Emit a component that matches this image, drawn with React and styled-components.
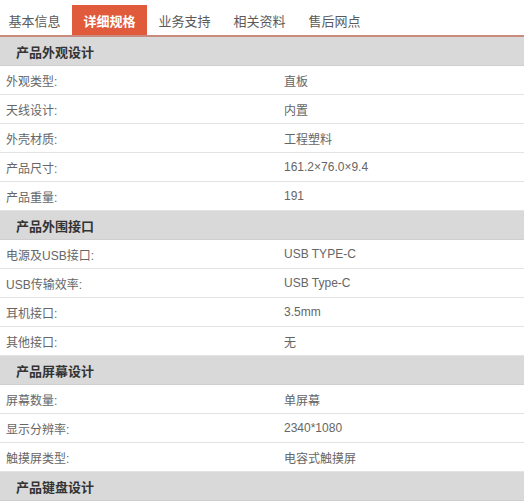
import styled, { createGlobalStyle } from "styled-components";

const GlobalStyle = createGlobalStyle`
  body {
    margin: 0;
    background: #ffffff;
    font-family: "Liberation Sans", "Noto Sans CJK SC", sans-serif;
  }
`;

const Page = styled.div`
  width: 524px;
  height: 501px;
  overflow: hidden;
  background: #ffffff;
`;

const Tabs = styled.div`
  display: flex;
  align-items: flex-end;
  height: 37px;
  margin-left: -3px;
  border-bottom: 2px solid #c98b7e;
  box-sizing: border-box;
`;

const Tab = styled.div`
  width: 75px;
  height: 30px;
  display: flex;
  align-items: center;
  justify-content: center;
  font-size: 13px;
  color: ${(p) => (p.$active ? "#fff" : "#5a5a5a")};
  background: ${(p) => (p.$active ? "#e05b3b" : "transparent")};
  font-weight: ${(p) => (p.$active ? "bold" : "normal")};
`;

const Section = styled.div`
  height: 29px;
  display: flex;
  align-items: center;
  padding-left: 16px;
  background: #d9d9d9;
  border-bottom: 1px solid #cfcfcf;
  box-sizing: border-box;
  font-size: 13px;
  font-weight: bold;
  color: #333;
`;

const Row = styled.div`
  height: 29px;
  display: flex;
  align-items: center;
  border-bottom: 1px solid #e3e3e3;
  box-sizing: border-box;
  font-size: 12px;
  color: #666;
`;

const Label = styled.div`
  width: 284px;
  padding-left: 6px;
  box-sizing: border-box;
`;

const Value = styled.div`
  flex: 1;
`;

const tabs = ["基本信息", "详细规格", "业务支持", "相关资料", "售后网点"];

const groups = [
  {
    title: "产品外观设计",
    rows: [
      ["外观类型:", "直板"],
      ["天线设计:", "内置"],
      ["外壳材质:", "工程塑料"],
      ["产品尺寸:", "161.2×76.0×9.4"],
      ["产品重量:", "191"],
    ],
  },
  {
    title: "产品外围接口",
    rows: [
      ["电源及USB接口:", "USB TYPE-C"],
      ["USB传输效率:", "USB Type-C"],
      ["耳机接口:", "3.5mm"],
      ["其他接口:", "无"],
    ],
  },
  {
    title: "产品屏幕设计",
    rows: [
      ["屏幕数量:", "单屏幕"],
      ["显示分辨率:", "2340*1080"],
      ["触摸屏类型:", "电容式触摸屏"],
    ],
  },
  { title: "产品键盘设计", rows: [] },
];

const App = () => {
  return (
    <Page>
      <GlobalStyle />
      <Tabs>
        {tabs.map((t, i) => (
          <Tab key={t} $active={i === 1}>
            {t}
          </Tab>
        ))}
      </Tabs>
      {groups.map((g) => (
        <div key={g.title}>
          <Section>{g.title}</Section>
          {g.rows.map(([k, v]) => (
            <Row key={k}>
              <Label>{k}</Label>
              <Value>{v}</Value>
            </Row>
          ))}
        </div>
      ))}
    </Page>
  );
};

export default App;
